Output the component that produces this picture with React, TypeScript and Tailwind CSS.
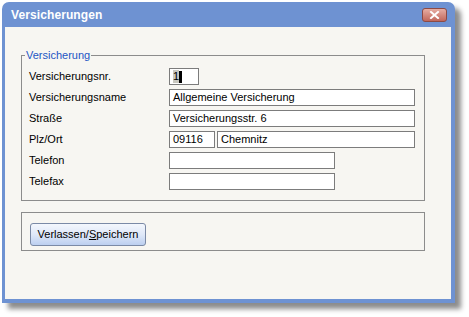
import React from 'react'

const font = { fontFamily: '"Liberation Sans", Arial, sans-serif' }

type RowProps = {
  label: string
  children: React.ReactNode
}

function Row({ label, children }: RowProps) {
  return (
    <div className="flex items-center h-[17px]">
      <div className="w-[140px] text-[11px] text-black leading-none">{label}</div>
      <div className="flex gap-[2px]">{children}</div>
    </div>
  )
}

function Field({ value, w }: { value?: string; w: string }) {
  return (
    <div
      className={`${w} h-[17px] border border-[#7c7c7c] bg-white px-[3px] text-[11px] leading-[15px] text-black whitespace-nowrap overflow-hidden`}
    >
      {value}
    </div>
  )
}

export default function App() {
  return (
    <div className="w-[469px] h-[317px] bg-white pl-[2px] pt-[2px]" style={font}>
      <div className="w-[453px] h-[301px] flex flex-col bg-[#6e92d2] rounded-t-[7px] shadow-[6px_6px_5px_rgba(0,0,0,0.45)]">
        {/* title bar */}
        <div className="h-[25px] flex items-center justify-between pl-[9px] pr-[8px]">
          <span className="text-white font-bold text-[12px] tracking-[0.1px]">Versicherungen</span>
          <button className="w-[25px] h-[14px] mt-[1px] rounded-[3px] border border-[#8d4a44] bg-gradient-to-b from-[#e6ada3] to-[#c0675c] flex items-center justify-center">
            <svg width="11" height="8" viewBox="0 0 11 8">
              <path d="M2 1L9 7M9 1L2 7" stroke="white" strokeWidth="2" strokeLinecap="square" />
            </svg>
          </button>
        </div>

        {/* client area */}
        <div className="flex-1 ml-[3px] mr-[4px] mb-[4px] bg-[#f7f6f2]">
          <div className="relative ml-[16px] mt-[28px] w-[404px] h-[146px] border border-[#8c8c8c] pl-[7px] pt-[12px]">
            <span className="absolute left-[3px] top-[-8px] bg-[#f7f6f2] px-[1px] text-[11px] leading-[14px] text-[#2355c4]">
              Versicherung
            </span>
            <div className="flex flex-col gap-[4px]">
              <Row label="Versicherungsnr.">
                <div className="w-[30px] h-[17px] border border-[#7c7c7c] bg-white pl-[3px] flex items-center">
                  <span className="bg-[#c9c8c0] text-[11px] leading-[13px] text-black">1</span>
                  <span className="w-[3px] h-[12px] bg-black"></span>
                </div>
              </Row>
              <Row label="Versicherungsname">
                <Field value="Allgemeine Versicherung" w="w-[246px]" />
              </Row>
              <Row label="Straße">
                <Field value="Versicherungsstr. 6" w="w-[246px]" />
              </Row>
              <Row label="Plz/Ort">
                <Field value="09116" w="w-[46px]" />
                <Field value="Chemnitz" w="w-[198px]" />
              </Row>
              <Row label="Telefon">
                <Field w="w-[166px]" />
              </Row>
              <Row label="Telefax">
                <Field w="w-[166px]" />
              </Row>
            </div>
          </div>

          <div className="ml-[16px] mt-[11px] w-[404px] h-[39px] border border-[#8c8c8c] pl-[8px] pt-[8px]">
            <button className="w-[116px] h-[23px] rounded-[3px] border border-[#7b8aa6] bg-gradient-to-b from-[#f4f7fd] via-[#dfe8f8] to-[#bccff0] text-[11px] text-black">
              Verlassen/<span className="underline">S</span>peichern
            </button>
          </div>
        </div>
      </div>
    </div>
  )
}
